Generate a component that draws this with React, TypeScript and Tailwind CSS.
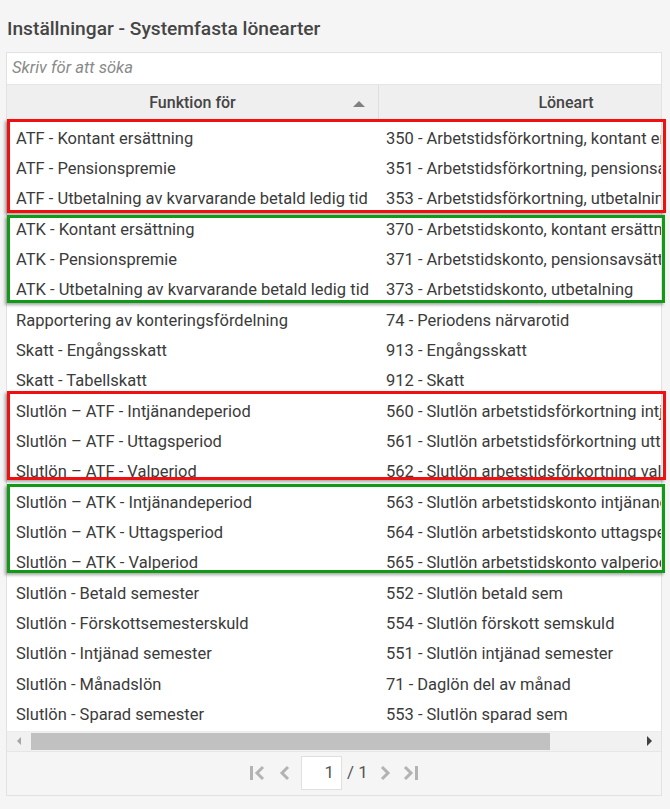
const ROWS: [string, string][] = [
  ["ATF - Kontant ersättning", "350 - Arbetstidsförkortning, kontant ersättning"],
  ["ATF - Pensionspremie", "351 - Arbetstidsförkortning, pensionsavsättning"],
  ["ATF - Utbetalning av kvarvarande betald ledig tid", "353 - Arbetstidsförkortning, utbetalning"],
  ["ATK - Kontant ersättning", "370 - Arbetstidskonto, kontant ersättning"],
  ["ATK - Pensionspremie", "371 - Arbetstidskonto, pensionsavsättning"],
  ["ATK - Utbetalning av kvarvarande betald ledig tid", "373 - Arbetstidskonto, utbetalning"],
  ["Rapportering av konteringsfördelning", "74 - Periodens närvarotid"],
  ["Skatt - Engångsskatt", "913 - Engångsskatt"],
  ["Skatt - Tabellskatt", "912 - Skatt"],
  ["Slutlön – ATF - Intjänandeperiod", "560 - Slutlön arbetstidsförkortning intjänandeperiod"],
  ["Slutlön – ATF - Uttagsperiod", "561 - Slutlön arbetstidsförkortning uttagsperiod"],
  ["Slutlön – ATF - Valperiod", "562 - Slutlön arbetstidsförkortning valperiod"],
  ["Slutlön – ATK - Intjänandeperiod", "563 - Slutlön arbetstidskonto intjänandeperiod"],
  ["Slutlön – ATK - Uttagsperiod", "564 - Slutlön arbetstidskonto uttagsperiod"],
  ["Slutlön – ATK - Valperiod", "565 - Slutlön arbetstidskonto valperiod"],
  ["Slutlön - Betald semester", "552 - Slutlön betald sem"],
  ["Slutlön - Förskottsemesterskuld", "554 - Slutlön förskott semskuld"],
  ["Slutlön - Intjänad semester", "551 - Slutlön intjänad semester"],
  ["Slutlön - Månadslön", "71 - Daglön del av månad"],
  ["Slutlön - Sparad semester", "553 - Slutlön sparad sem"],
];

const PagerIcon = ({ kind }: { kind: "first" | "prev" | "next" | "last" }) => {
  if (kind === "prev" || kind === "next") {
    return (
      <svg width="12" height="16" viewBox="0 0 12 16" className="shrink-0">
        <path
          d={kind === "prev" ? "M9 2l-6 6 6 6" : "M3 2l6 6-6 6"}
          fill="none"
          stroke="#b3b3b3"
          strokeWidth="3"
        />
      </svg>
    );
  }
  return (
    <svg width="17" height="16" viewBox="0 0 17 16" className="shrink-0">
      <path
        d={kind === "first" ? "M2.5 1v14 M14 2l-6 6 6 6" : "M14.5 1v14 M3 2l6 6-6 6"}
        fill="none"
        stroke="#b3b3b3"
        strokeWidth="3"
      />
    </svg>
  );
};

const Box = ({ top, height, color }: { top: number; height: number; color: "red" | "green" }) => (
  <div
    className={
      color === "red"
        ? "absolute left-[7px] w-[659px] border-[3px] border-[#f01010] shadow-[-2px_2px_3px_rgba(0,0,0,0.35)]"
        : "absolute left-[7px] w-[658px] border-[3px] border-[#119a16] shadow-[-2px_2px_3px_rgba(0,0,0,0.35)]"
    }
    style={{ top, height }}
  />
);

export default function App() {
  return (
    <div className="relative w-[670px] h-[809px] bg-[#f5f5f5] font-['Roboto',sans-serif] text-[#3b3b3b] overflow-hidden">
      <div className="h-[52px] pl-[7px] pt-[16px] text-[19.2px] font-medium leading-[26px] text-[#454545]">
        Inställningar - Systemfasta lönearter
      </div>

      <div className="ml-[6px] w-[656px] border border-[#e2e2e2] bg-white">
        <div className="h-[32px] flex items-center px-[5px] border-b border-[#e6e6e6]">
          <span className="italic text-[16.6px] text-[#8a8a8a]">Skriv för att söka</span>
        </div>

        <div className="w-[654px] overflow-hidden">
          <div className="w-[746px]">
            <div className="flex h-[37px] bg-[#efefef] border-b border-[#e6e6e6] text-[16px] font-medium text-[#454545]">
              <div className="relative w-[372px] flex items-center justify-center border-r border-[#dedede]">
                Funktion för
                <span className="absolute left-[346px] top-[16px] w-0 h-0 border-l-[6px] border-r-[6px] border-b-[6px] border-l-transparent border-r-transparent border-b-[#808080]" />
              </div>
              <div className="w-[374px] flex items-center justify-center">Löneart</div>
            </div>

            <div className="pt-[2px] text-[16.5px]">
              {ROWS.map(([a, b]) => (
                <div key={a} className="flex h-[30.33px] items-center whitespace-nowrap">
                  <div className="w-[372px] pl-[9px] overflow-hidden">{a}</div>
                  <div className="w-[374px] pl-[7px] overflow-hidden">{b}</div>
                </div>
              ))}
            </div>
          </div>
        </div>

        <div className="flex items-center h-[20px] bg-[#f1f1f1] border-t border-[#ececec]">
          <div className="w-[24px] flex justify-center">
            <span className="w-0 h-0 border-t-[4px] border-b-[4px] border-r-[4px] border-t-transparent border-b-transparent border-r-[#a5a5a5]" />
          </div>
          <div className="w-[519px] h-[17px] bg-[#c1c1c1]" />
          <div className="flex-1" />
          <div className="w-[24px] flex justify-center">
            <span className="w-0 h-0 border-t-[5px] border-b-[5px] border-l-[5px] border-t-transparent border-b-transparent border-l-[#404040]" />
          </div>
        </div>

        <div className="h-[44px] bg-[#f5f5f5] border-t border-[#e6e6e6] flex items-center justify-center">
          <PagerIcon kind="first" />
          <span className="w-[13px]" />
          <PagerIcon kind="prev" />
          <span className="w-[10px]" />
          <div className="w-[41px] h-[34px] bg-white border border-[#e0e0e0] flex items-center justify-end pr-[7px] text-[17px] text-[#555]">
            1
          </div>
          <span className="ml-[5px] text-[17px] text-[#555]">/ 1</span>
          <span className="w-[11px]" />
          <PagerIcon kind="next" />
          <span className="w-[11px]" />
          <PagerIcon kind="last" />
        </div>
      </div>

      <Box top={119} height={94} color="red" />
      <Box top={215} height={88} color="green" />
      <Box top={391} height={89} color="red" />
      <Box top={484} height={89} color="green" />
    </div>
  );
}
